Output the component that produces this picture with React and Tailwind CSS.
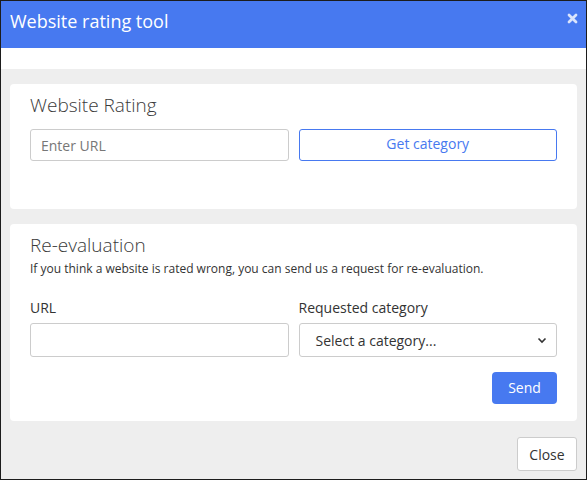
import React from 'react';

const font = { fontFamily: '"Open Sans", "Noto Sans", sans-serif' };

function CloseIcon() {
  return (
    <svg width="11" height="11" viewBox="0 0 11 11" className="opacity-80">
      <path d="M2 2 L9 9 M9 2 L2 9" stroke="#fff" strokeWidth="2.8" strokeLinecap="round" />
    </svg>
  );
}

function Chevron() {
  return (
    <svg width="10" height="7" viewBox="0 0 10 7">
      <path d="M1.5 1.5 L5 5 L8.5 1.5" stroke="#333" strokeWidth="1.6" fill="none" />
    </svg>
  );
}

export default function App() {
  return (
    <div
      className="w-[587px] h-[480px] border border-[#1c1c1c] flex flex-col overflow-hidden bg-[#eeeeee] text-[#333]"
      style={font}
    >
      {/* header */}
      <div className="h-[47px] shrink-0 bg-[#4779f0] flex items-start justify-between pl-[9px] pr-[8px]">
        <h1 className="text-[18px] leading-[24px] text-white mt-[8px]">Website rating tool</h1>
        <div className="mt-[12px]">
          <CloseIcon />
        </div>
      </div>
      <div className="h-[21px] shrink-0 bg-white" />

      {/* body */}
      <div className="flex-1 flex flex-col px-[9px] pt-[15px] gap-[15px]">
        <div className="bg-white rounded-[4px] h-[125px] px-[20px] pt-[9px]">
          <h2 className="text-[19px] leading-[24px] font-light text-[#3a3a3a]">Website Rating</h2>
          <div className="grid grid-cols-2 gap-[10px] mt-[12px]">
            <input
              className="h-[32px] border border-[#ccc] rounded-[3px] px-[10px] text-[14px] leading-[20px] outline-none placeholder:text-[#777]"
              placeholder="Enter URL"
            />
            <button className="h-[32px] border border-[#4779f0] rounded-[3px] text-[14px] leading-[20px] pb-[2px] text-[#4779f0] bg-white">
              Get category
            </button>
          </div>
        </div>

        <div className="bg-white rounded-[4px] h-[197px] px-[20px] pt-[9px] flex flex-col">
          <h2 className="text-[19px] leading-[24px] font-light text-[#3a3a3a]">Re-evaluation</h2>
          <p className="text-[12px] leading-[18px] mt-[3px] text-[#333]">
            If you think a website is rated wrong, you can send us a request for re-evaluation.
          </p>
          <div className="grid grid-cols-2 gap-[10px] mt-[20px]">
            <div className="flex flex-col gap-[5px]">
              <label className="text-[14px] leading-[20px]">URL</label>
              <input className="h-[34px] border border-[#ccc] rounded-[3px] px-[10px] text-[14px] outline-none" />
            </div>
            <div className="flex flex-col gap-[5px]">
              <label className="text-[14px] leading-[20px]">Requested category</label>
              <div className="h-[34px] border border-[#ccc] rounded-[3px] pl-[16px] pr-[9px] flex items-center justify-between text-[14px] text-[#333]">
                <span>Select a category...</span>
                <Chevron />
              </div>
            </div>
          </div>
          <div className="flex justify-end mt-[15px]">
            <button className="h-[32px] w-[65px] rounded-[4px] bg-[#4779f0] text-white text-[14px] pb-[2px]">
              Send
            </button>
          </div>
        </div>

        <div className="flex justify-end mt-[1px] pb-[9px]">
          <button className="h-[34px] w-[60px] rounded-[3px] border border-[#ccc] bg-white text-[14px] text-[#333]">
            Close
          </button>
        </div>
      </div>
    </div>
  );
}
